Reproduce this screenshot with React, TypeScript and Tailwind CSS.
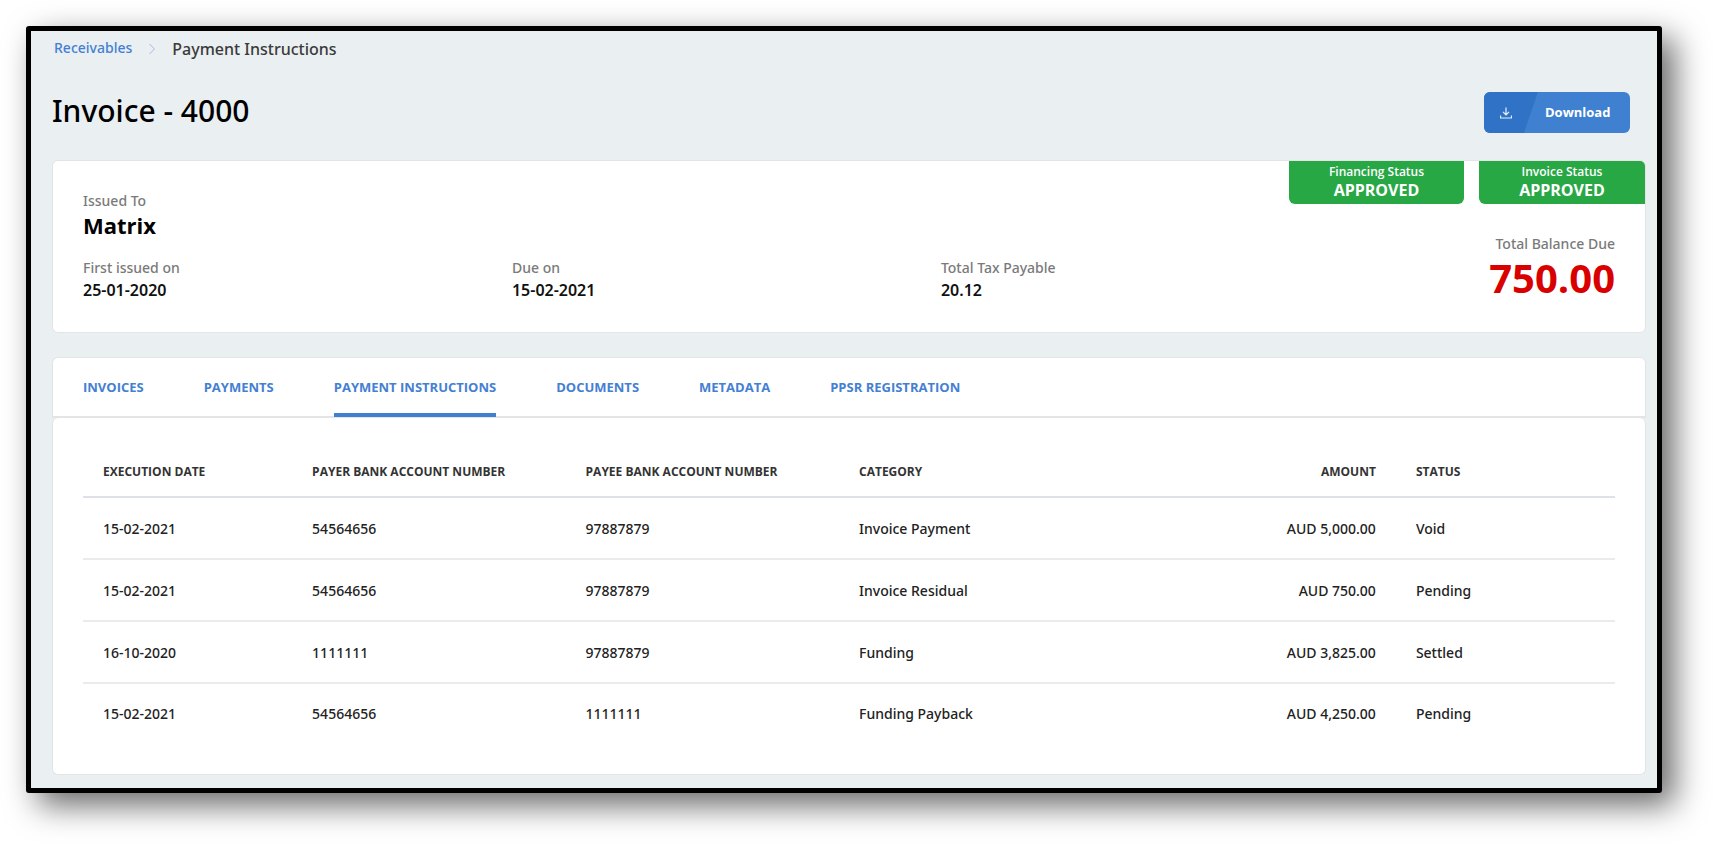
import { ReactNode } from "react";

const tabs = ["Invoices", "Payments", "Payment Instructions", "Documents", "Metadata", "PPSR Registration"];

const rows = [
  ["15-02-2021", "54564656", "97887879", "Invoice Payment", "AUD 5,000.00", "Void"],
  ["15-02-2021", "54564656", "97887879", "Invoice Residual", "AUD 750.00", "Pending"],
  ["16-10-2020", "1111111", "97887879", "Funding", "AUD 3,825.00", "Settled"],
  ["15-02-2021", "54564656", "1111111", "Funding Payback", "AUD 4,250.00", "Pending"],
];

const columns = [
  { label: "Execution Date", width: "w-[13.65%]" },
  { label: "Payer Bank Account Number", width: "w-[17.85%]" },
  { label: "Payee Bank Account Number", width: "w-[17.85%]" },
  { label: "Category", width: "w-[18%]" },
  { label: "Amount", width: "w-[18.35%] text-right" },
  { label: "Status", width: "w-[14.3%]" },
];

function Detail({ label, children }: { label: string; children: ReactNode }) {
  return (
    <div className="w-[28%]">
      <dt className="text-sm leading-6 font-medium text-[#7a7a7a]">{label}</dt>
      <dd className="text-base leading-5 font-semibold text-[#111]">{children}</dd>
    </div>
  );
}

function StatusBadge({ label, className }: { label: string; className: string }) {
  return (
    <div className={`h-[43px] bg-[#28a745] pt-[3px] text-center font-['Open_Sans',sans-serif] text-white ${className}`}>
      <p className="text-xs leading-4 font-semibold">{label}</p>
      <p className="text-base leading-5 font-bold">APPROVED</p>
    </div>
  );
}

export default function App() {
  return (
    <div className="bg-white pt-[26px] pr-[53px] pb-[53px] pl-[26px] font-['Noto_Sans',sans-serif]">
      <main className="rounded-[3px] border-[5px] border-black bg-[#eaeff2] pr-[11px] pb-[13px] pl-[21px] shadow-[12px_12px_32px_rgba(0,0,0,0.6)]">
        <nav aria-label="Breadcrumb" className="flex h-9 items-center pl-0.5">
          <a href="#receivables" className="pb-0.5 text-sm font-medium text-[#4480d2]">Receivables</a>
          <svg className="mx-4 h-3 w-2" viewBox="0 0 8 12" fill="none" stroke="#a9bbdc" aria-hidden="true">
            <path d="M1.5 1 6.5 6l-5 5" />
          </svg>
          <span aria-current="page" className="text-base font-medium text-[#3a3a3a]">Payment Instructions</span>
        </nav>

        <header className="mt-[25px] flex h-[41px] items-center justify-between pr-4">
          <h1 className="pb-1 text-[30px] leading-9 font-medium text-black">Invoice - 4000</h1>
          <button
            type="button"
            className="flex h-[41px] w-[146px] items-center overflow-hidden rounded-md bg-[#4080d0] font-['Open_Sans',sans-serif] text-[13px] font-bold text-white"
          >
            <span className="flex h-full w-[54px] items-center bg-[#3073c6] pl-4 [clip-path:polygon(0_0,100%_0,40px_100%,0_100%)]">
              <svg className="h-3 w-3" viewBox="0 0 12 12" fill="none" stroke="#e4eefa" strokeWidth="1.2" aria-hidden="true">
                <path d="M6 0.5v7M3 4.8l3 3 3-3M0.5 8.5v2.5h11V8.5" />
              </svg>
            </span>
            <span className="pl-[7px]">Download</span>
          </button>
        </header>

        <section className="relative mt-[27px] flex h-[173px] overflow-hidden rounded-md border border-[#e2e4e5] bg-white px-[30px]">
          <div className="absolute top-0 right-0 flex gap-[15px]">
            <StatusBadge label="Financing Status" className="w-[175px] rounded-b-md" />
            <StatusBadge label="Invoice Status" className="w-[166px] rounded-bl-md" />
          </div>
          <div className="w-full pt-7">
            <p className="text-sm leading-6 font-medium text-[#7a7a7a]">Issued To</p>
            <h2 className="font-['Open_Sans',sans-serif] text-[22px] leading-6 font-bold text-black">Matrix</h2>
            <dl className="mt-[19px] flex">
              <Detail label="First issued on">25-01-2020</Detail>
              <Detail label="Due on">15-02-2021</Detail>
              <Detail label="Total Tax Payable">20.12</Detail>
            </dl>
          </div>
          <div className="absolute top-[71px] right-[30px] text-right">
            <p className="text-sm leading-6 font-medium text-[#7a7a7a]">Total Balance Due</p>
            <p className="font-['Open_Sans',sans-serif] text-[40px] leading-[44px] font-bold text-[#d90000]">750.00</p>
          </div>
        </section>

        <nav
          aria-label="Invoice sections"
          className="mt-6 flex h-[61px] gap-[60px] rounded-t-md border border-b-2 border-[#e2e4e5] bg-white px-[30px]"
        >
          {tabs.map((tab) => (
            <a
              key={tab}
              href="#section"
              className={`-mb-px border-b-4 pt-[19px] font-['Open_Sans',sans-serif] text-[13px] leading-5 font-bold text-[#4480d2] uppercase ${
                tab === "Payment Instructions" ? "border-[#4080d0]" : "border-transparent"
              }`}
            >
              {tab}
            </a>
          ))}
        </nav>

        <section className="rounded-md border border-t-0 border-[#e2e4e5] bg-white px-[30px] pt-[29px] pb-[31px]">
          <table className="w-full table-fixed text-left">
            <thead>
              <tr className="h-[50px] border-b-2 border-[#dee2e6]">
                {columns.map(({ label, width }) => (
                  <th
                    key={label}
                    scope="col"
                    className={`px-5 font-['Open_Sans',sans-serif] text-xs font-bold whitespace-nowrap text-[#333] uppercase ${width}`}
                  >
                    {label}
                  </th>
                ))}
              </tr>
            </thead>
            <tbody>
              {rows.map((row, index) => (
                <tr key={index} className="h-[62px] border-b-2 border-[#e9ebed] last:h-15 last:border-0">
                  {row.map((cell, i) => (
                    <td key={i} className={`px-5 pt-px text-sm font-medium text-[#222] ${i === 4 ? "text-right" : ""}`}>
                      {cell}
                    </td>
                  ))}
                </tr>
              ))}
            </tbody>
          </table>
        </section>
      </main>
    </div>
  );
}
